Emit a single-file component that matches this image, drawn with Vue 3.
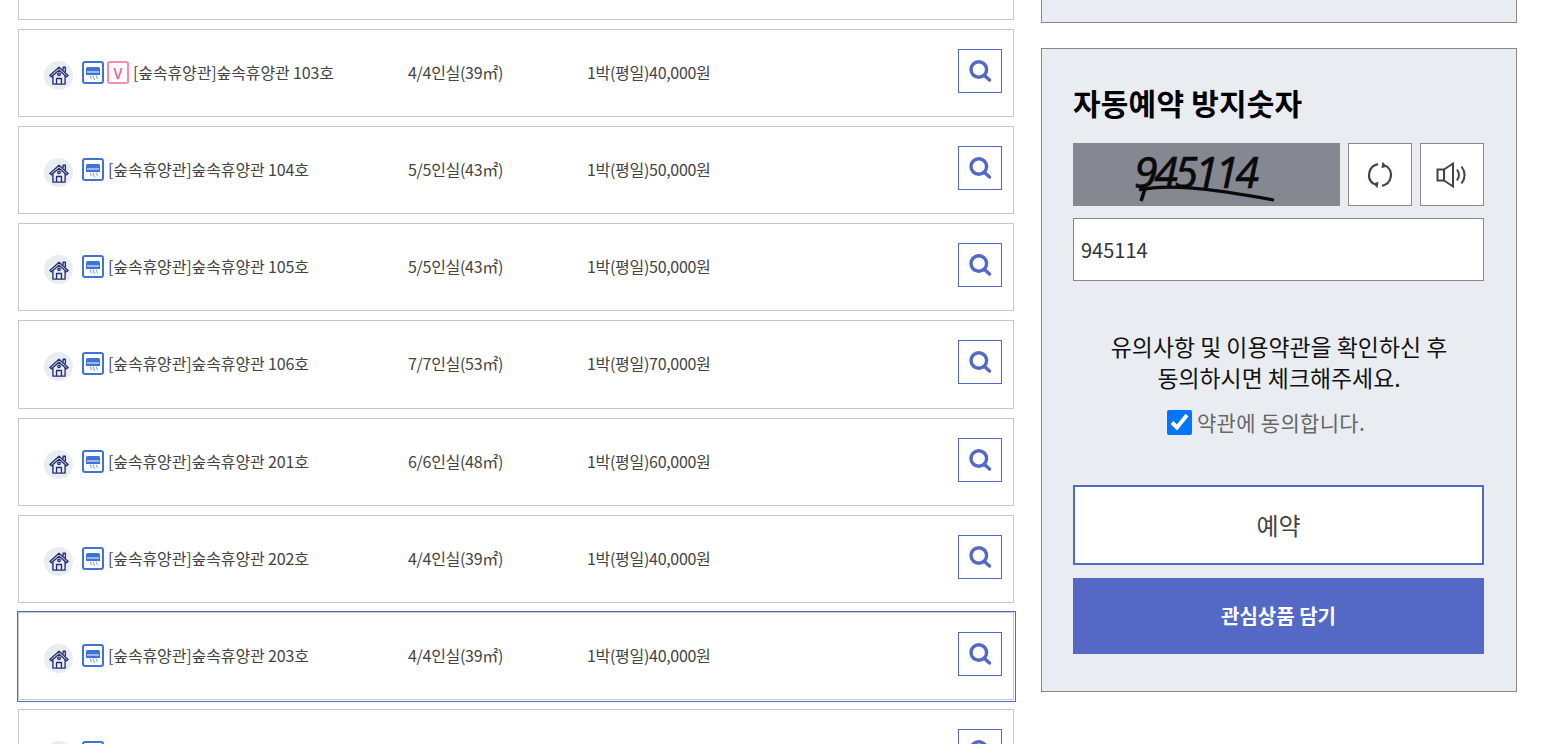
<template>
  <div class="page">
    <div class="list">
      <div
        v-for="(room, i) in rooms"
        :key="i"
        :class="['row', { focused: room.focused }]"
      >
        <span class="house">
          <svg width="20" height="20" viewBox="0 0 22 22" fill="none" stroke="#252f6e" stroke-width="1.5" stroke-linejoin="round">
            <path d="M1 11.5 11 2.5 21 11.5 19.3 13 11 5.8 2.7 13Z" />
            <path d="M15.5 5.5V2.5H18V8" />
            <path d="M4.3 12V21H17.7V12" />
            <path d="M8.3 21V14.8H13.7V21" />
            <circle cx="11" cy="10.3" r="1.4" />
          </svg>
        </span>
        <div class="name">
          <span class="tag ac">
            <svg width="18" height="19" viewBox="0 0 18 19">
              <path d="M2 5.5Q2 4 3.5 4H14.5Q16 4 16 5.5V12H2Z" fill="#3f74d6" />
              <path d="M3 9H15" stroke="#dfe8fa" stroke-width="1.2" />
              <path d="M6 12.5 7.5 16M9 12.5 10.5 17M12 12.5 13.5 16" stroke="#7f9fe0" stroke-width="1" />
            </svg>
          </span>
          <span v-if="room.vip" class="tag vip">V</span>
          <span v-if="room.name" class="title">[숲속휴양관]숲속휴양관 {{ room.name }}</span>
        </div>
        <div class="size">{{ room.size }}</div>
        <div class="price">{{ room.price }}</div>
        <button class="search">
          <svg width="24" height="24" viewBox="0 0 24 24" fill="none" stroke="#5468c5">
            <circle cx="10.8" cy="10.5" r="7.8" stroke-width="3.4" />
            <path d="M16.5 16.5 21.5 21" stroke-width="3.4" stroke-linecap="round" />
          </svg>
        </button>
      </div>
    </div>

    <div class="side">
      <div class="stub"></div>
      <div class="panel">
        <h2>자동예약 방지숫자</h2>
        <div class="captcha-row">
          <div class="captcha">
            <span>945114</span>
            <svg width="267" height="63" viewBox="0 0 267 63" fill="none" stroke="#0a0a0a">
              <path d="M66 47C92 41 130 44 201 57" stroke-width="3.2" />
              <path d="M72 46 68 58" stroke-width="3.6" />
            </svg>
          </div>
          <button class="square">
            <svg width="28" height="28" viewBox="0 0 28 28" fill="none" stroke="#444" stroke-width="2.2">
              <path d="M12 3.2A11 11 0 0 0 8 23.2" />
              <path d="M16 24.8A11 11 0 0 0 20 4.8" />
              <path d="M16.5 .8 21 5.4 15.5 7.2Z" fill="#444" stroke="none" />
              <path d="M11.5 27.2 7 22.6 12.5 20.8Z" fill="#444" stroke="none" />
            </svg>
          </button>
          <button class="square">
            <svg width="32" height="28" viewBox="0 0 32 28" fill="none" stroke="#444" stroke-width="2">
              <path d="M1.5 8.5H8V19.5H1.5Z" />
              <path d="M8 8.5 17 2.5V25.5L8 19.5" />
              <path d="M21 8.5C23.5 12 23.5 16 21 19.5" />
              <path d="M25.5 5.5C29.5 11 29.5 17 25.5 22.5" />
            </svg>
          </button>
        </div>
        <input class="code" type="text" value="945114" />
        <p class="notice">유의사항 및 이용약관을 확인하신 후<br />동의하시면 체크해주세요.</p>
        <label class="agree">
          <input type="checkbox" checked />
          <span>약관에 동의합니다.</span>
        </label>
        <button class="reserve">예약</button>
        <button class="wish">관심상품 담기</button>
      </div>
    </div>
  </div>
</template>

<script setup>
const rooms = [
  { name: '', size: '', price: '' },
  { name: '103호', size: '4/4인실(39㎡)', price: '1박(평일)40,000원', vip: true },
  { name: '104호', size: '5/5인실(43㎡)', price: '1박(평일)50,000원' },
  { name: '105호', size: '5/5인실(43㎡)', price: '1박(평일)50,000원' },
  { name: '106호', size: '7/7인실(53㎡)', price: '1박(평일)70,000원' },
  { name: '201호', size: '6/6인실(48㎡)', price: '1박(평일)60,000원' },
  { name: '202호', size: '4/4인실(39㎡)', price: '1박(평일)40,000원' },
  { name: '203호', size: '4/4인실(39㎡)', price: '1박(평일)40,000원', focused: true },
  { name: '', size: '', price: '' }
]
</script>

<style>
html, body {
  margin: 0;
  height: 744px;
  overflow: hidden;
  background: #fff;
}
</style>

<style scoped>
.page {
  display: flex;
  align-items: flex-start;
  gap: 27px;
  height: 744px;
  overflow: hidden;
  padding-left: 18px;
  font-family: "Noto Sans CJK KR", "Noto Sans", sans-serif;
  color: #444;
}

.list {
  width: 996px;
  flex: none;
  margin-top: -68.4px;
}

.row {
  position: relative;
  box-sizing: border-box;
  height: 88.2px;
  margin-bottom: 9px;
  border: 1px solid #c8c8c8;
  display: flex;
  align-items: center;
  padding: 0 11px 2px 25px;
  font-size: 16px;
  letter-spacing: -0.3px;
}

.row.focused::after {
  content: '';
  position: absolute;
  left: -2px;
  top: -2px;
  right: -3px;
  bottom: -3px;
  border: 1px solid #5468c5;
}

.house {
  width: 29px;
  height: 29px;
  margin-top: 7px;
  border-radius: 50%;
  background: #e9edf2;
  display: flex;
  align-items: center;
  justify-content: center;
  flex: none;
}

.name {
  width: 326px;
  margin-left: 9px;
  display: flex;
  align-items: center;
  gap: 3px;
  flex: none;
}

.tag {
  box-sizing: border-box;
  width: 22px;
  height: 23px;
  margin-top: 1px;
  border-radius: 3px;
  display: flex;
  align-items: center;
  justify-content: center;
  flex: none;
}

.ac {
  border: 2px solid #3f74d6;
}

.vip {
  border: 2px solid #f58bb0;
  color: #f0609a;
  font-size: 15px;
  font-weight: 500;
  letter-spacing: 0;
}

.title {
  margin-left: 1px;
  letter-spacing: -0.12px;
}

.size {
  width: 179px;
  flex: none;
}

.price {
  flex: 1;
}

.search {
  box-sizing: border-box;
  width: 44px;
  height: 44px;
  margin-top: -2px;
  padding: 0;
  border: 1px solid #5468c5;
  background: #fff;
  display: flex;
  align-items: center;
  justify-content: center;
}

.side {
  width: 476px;
  flex: none;
}

.stub {
  box-sizing: border-box;
  height: 23px;
  background: #e9edf2;
  border: 1px solid #888;
  border-top: 0;
  margin-bottom: 25px;
}

.panel {
  box-sizing: border-box;
  height: 644px;
  padding: 0 31px;
  background: #e9edf2;
  border: 1px solid #888;
  display: flex;
  flex-direction: column;
}

h2 {
  margin: 32px 0 0;
  height: 62px;
  font-size: 30px;
  line-height: 42px;
  font-weight: 700;
  letter-spacing: 0.2px;
  color: #000;
}

.captcha-row {
  display: flex;
  gap: 8px;
  height: 63px;
}

.captcha {
  position: relative;
  box-sizing: border-box;
  width: 267px;
  flex: none;
  padding-left: 61px;
  background: #868891;
  color: #0a0a0a;
  font-family: "Noto Sans", sans-serif;
  font-size: 43px;
  font-style: italic;
  letter-spacing: -3.4px;
  line-height: 58px;
  -webkit-text-stroke: 0.5px #0a0a0a;
}

.captcha svg {
  position: absolute;
  left: 0;
  top: 0;
}

.square {
  box-sizing: border-box;
  width: 64px;
  height: 63px;
  padding: 0;
  border: 1px solid #888;
  background: #fff;
  display: flex;
  align-items: center;
  justify-content: center;
}

.code {
  box-sizing: border-box;
  width: 411px;
  height: 63px;
  margin-top: 12px;
  padding: 0 7px;
  border: 1px solid #888;
  border-radius: 0;
  background: #fff;
  color: #333;
  font-family: inherit;
  font-size: 20px;
}

.notice {
  margin: 50px 0 0;
  font-size: 22.9px;
  line-height: 31px;
  color: #111;
  text-align: center;
}

.agree {
  display: flex;
  align-items: center;
  justify-content: center;
  gap: 5px;
  margin-top: 14px;
  padding-right: 26px;
  font-size: 21px;
  letter-spacing: 0.3px;
  line-height: 30px;
  color: #666;
}

.agree input {
  width: 25px;
  height: 25px;
  margin: 0;
}

.reserve {
  box-sizing: border-box;
  width: 411px;
  height: 80px;
  margin-top: 48px;
  padding: 0 0 2px;
  border: 2px solid #5468c5;
  background: #fff;
  color: #444;
  font-family: inherit;
  font-size: 24px;
}

.wish {
  width: 411px;
  height: 76px;
  margin-top: 13px;
  padding: 0 0 2px;
  border: 0;
  background: #5468c5;
  color: #fff;
  font-family: inherit;
  font-size: 20px;
  font-weight: 700;
}
</style>
